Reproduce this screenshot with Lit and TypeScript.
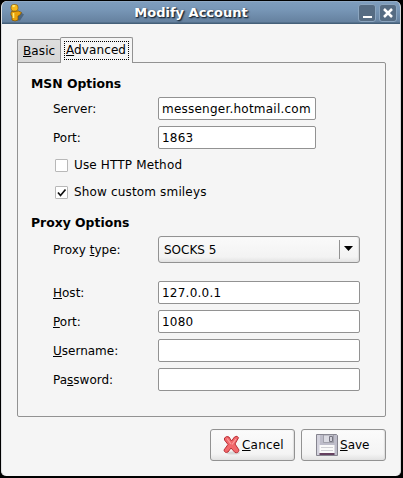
import { LitElement, html, css } from "lit";
import { customElement } from "lit/decorators.js";

@customElement("app-root")
export class AppRoot extends LitElement {
  static styles = css`
    :host { display: block; width: 403px; height: 478px; background: #000; overflow: hidden;
      font: 12px/15px "DejaVu Sans", sans-serif; color: #000; }
    * { box-sizing: border-box; }
    .window { width: 403px; height: 478px; padding: 1px 2px 2px 1px; display: flex; }
    .frame { flex: 1; border-radius: 6px 6px 5px 5px; overflow: hidden; background: #f5f5f5;
      display: flex; flex-direction: column; border-left: 1px solid #dfe1e3; border-right: 1px solid #d5d7d9; }
    .title { height: 23px; flex: none; display: grid; grid-template-columns: 22px 1fr 42px; align-items: center;
      background: linear-gradient(#9fb4cb 0, #7e9dbd 1px, #7796b6 9px, #65819f 21px, #456079 22px, #456079 23px); }
    .title .mascot { margin: 1px 0 0 5px; display: block; }
    .title h1 { margin: 0; text-align: center; font: bold 13px/16px "DejaVu Sans", sans-serif; color: #fff;
      text-shadow: 1px 1px 1px #1d2c3b, 1px 1px 2px #1d2c3b; white-space: nowrap; }
    .wbtns { display: flex; gap: 3px; margin-top: 1px; }
    .wbtn { width: 18px; height: 18px; border: 1px solid #8ba5bf; border-radius: 3px; background: #566c83; display: block; }
    .body { flex: 1; padding: 13px 15px 0 15px; display: flex; flex-direction: column; }
    .tabs { height: 26px; display: flex; align-items: flex-end; z-index: 1; margin-bottom: -1px; }
    .tab { border: 1px solid #929292; border-radius: 2px 2px 0 0; white-space: nowrap; }
    .tab.basic { width: 44px; height: 24px; padding: 4px 0 0 5px;
      background: linear-gradient(#dedede, #d6d6d6); border-right: 0; letter-spacing: .1px; }
    .tab.adv { width: 73px; height: 26px; margin-left: -1px; background: #f5f5f5; border-bottom: 0; padding: 3px; letter-spacing: .1px; }
    .focus { display: block; height: 19px; border: 1px dotted #000; padding: 1px 0 0 1px; }
    .panel { height: 355px; flex: none; border: 1px solid #929292; border-radius: 0 2px 2px 2px; width: 369px; padding: 13px 0 0 13px; }
    h2 { margin: 0 0 6px; font: bold 12.4px/15px "DejaVu Sans", sans-serif; white-space: nowrap; }
    .checks { margin: 9px 0 15px 24px; display: flex; flex-direction: column; gap: 12px; }
    .row { display: grid; grid-template-columns: 105px 1fr; height: 23px; margin: 0 0 6px 22px; align-items: center; white-space: nowrap; }
    .row > span { padding-top: 2px; }
    .row.type { height: 27px; margin-bottom: 18px; }
    .field { height: 23px; width: 202px; border: 1px solid #929292; border-radius: 2px; background: #fff; padding: 4px 0 0 3px; letter-spacing: .23px; }
    .field.short { width: 158px; }
    .check { display: flex; align-items: center; height: 15px; gap: 6px; white-space: nowrap; letter-spacing: .16px; }
    .box { width: 13px; height: 13px; border: 1px solid #b8b8b8; border-radius: 1px; background: #fff; display: block; }
    .combo { width: 202px; height: 27px; border: 1px solid #929292; border-radius: 3px; display: flex; align-items: center;
      padding-left: 5px; background: linear-gradient(#fafafa, #f3f3f3 80%, #e2e2e2); box-shadow: inset -1px 0 1px #dedede; }
    .combo span { flex: 1; padding-top: 2px; }
    .arrow { width: 20px; height: 19px; border-left: 1px solid #929292; display: block; }
    .actions { display: flex; justify-content: flex-end; gap: 6px; margin: 12px 0 0; width: 369px; }
    .btn { width: 85px; height: 32px; border: 1px solid #929292; border-radius: 3px; display: flex; align-items: center; padding-left: 12px;
      background: linear-gradient(#fbfbfb, #f4f4f4 80%, #e2e2e2); box-shadow: inset -1px 0 1px #dedede; white-space: nowrap; letter-spacing: .2px; }
    .btn.save { padding-left: 14px; gap: 2px; letter-spacing: 0; }
    .btn svg { flex: none; }
    u { text-decoration: underline; text-underline-offset: 1px; text-decoration-thickness: 1px; text-decoration-skip-ink: none; }
  `;

  private field(label: unknown, value = "", short = false) {
    return html`<div class="row"><span>${label}</span><div class="field ${short ? "short" : ""}">${value}</div></div>`;
  }

  render() {
    return html`<div class="window"><div class="frame">
      <header class="title">
        <svg class="mascot" width="18" height="20" viewBox="0 0 18 20">
          <path d="M5 17.500h8l4-6-3-2-4 4z" fill="#25384c" opacity=".45"/>
          <path d="M4.500 8.500Q3.500 10 4 12.500l1 .5v4q3 2 6 0v-4l2-1 1.500-2.500-3-1.500z" fill="#e9a10c" stroke="#805400" stroke-width=".7"/>
          <rect x="4" y="1.500" width="7" height="6.500" rx="2.500" fill="#f6b91c" stroke="#916005" stroke-width=".7"/>
          <path d="M5.500 3.500q1-1 2.500-.5M6.500 10v5" stroke="#ffed79" stroke-width="1.6" fill="none"/>
        </svg>
        <h1>Modify Account</h1>
        <div class="wbtns">
          <svg class="wbtn" viewBox="0 0 16 16"><path d="M4 11h9v2H4z" fill="#fff"/></svg>
          <svg class="wbtn" viewBox="0 0 16 16"><path d="M4 4l8 8M12 4l-8 8" stroke="#fff" stroke-width="2.5"/></svg>
        </div>
      </header>
      <main class="body">
        <div class="tabs">
          <div class="tab basic"><u>B</u>asic</div>
          <div class="tab adv"><span class="focus"><u>A</u>dvanced</span></div>
        </div>
        <section class="panel">
          <h2>MSN Options</h2>
          ${this.field("Server:", "messenger.hotmail.com", true)}
          ${this.field("Port:", "1863", true)}
          <div class="checks">
            <div class="check"><span class="box"></span>Use HTTP Method</div>
            <div class="check"><svg class="box" viewBox="0 0 11 11"><path d="M2 5.500L4.500 8.500 9.500 2.500" fill="none" stroke="#111" stroke-width="1.7"/></svg>Show custom smileys</div>
          </div>
          <h2>Proxy Options</h2>
          <div class="row type"><span>Proxy <u>t</u>ype:</span>
            <div class="combo"><span>SOCKS 5</span><svg class="arrow" viewBox="0 0 19 19"><path d="M4 6h9L8.500 11z"/></svg></div></div>
          ${this.field(html`<u>H</u>ost:`, "127.0.0.1")}
          ${this.field(html`<u>P</u>ort:`, "1080")}
          ${this.field(html`<u>U</u>sername:`)}
          ${this.field(html`Pa<u>s</u>sword:`)}
        </section>
        <div class="actions">
          <div class="btn"><svg width="19" height="20" viewBox="0 0 19 20">
            <ellipse cx="10" cy="18" rx="7" ry="1.6" fill="#d8d8d8"/>
            <path d="M1.500 3q2-2.500 4.500-1l2.500 4L11.500 2q3-2 4 .8L12 9l4 6q-.5 3.500-4 2.500L8 13 5 17q-3.500 1.500-4-2l4-5.500L1.500 5z" fill="#f1686b" stroke="#b92f36" stroke-width="1"/>
            <path d="M4 3.500l4 5.500M13 4L9 9.500" stroke="#fa9d9e" stroke-width="1.2"/></svg><span><u>C</u>ancel</span></div>
          <div class="btn save"><svg width="22" height="22" viewBox="0 0 22 22">
            <path d="M.5.5h20l1 1v20H.5z" fill="#bebdca" stroke="#85848f"/>
            <path d="M1 1h3v20H1z" fill="#d3d2dd"/>
            <path d="M7.500 1h10v7.500h-10z" fill="#dcdce4" stroke="#96959f" stroke-width=".8"/>
            <path d="M13.500 2.500h3v5h-3z" fill="#cfcfd8" stroke="#767582"/>
            <path d="M3.500 11h15v8h-15z" fill="#fafafa"/><path d="M5 13.500h12M5 16.500h12" stroke="#d0d0d5"/>
            <path d="M3.500 19h15v2h-15z" fill="#65405f"/></svg><span><u>S</u>ave</span></div>
        </div>
      </main>
    </div></div>`;
  }
}
